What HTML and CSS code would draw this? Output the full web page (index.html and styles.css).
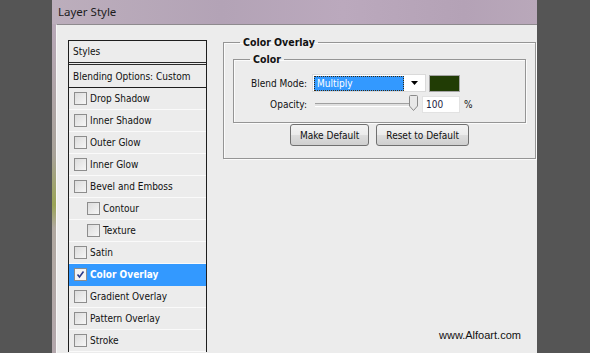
FILE: index.html
```html
<!DOCTYPE html>
<html>
<head>
    <meta charset="UTF-8">
    <title>Layer Style</title>
    <link rel="stylesheet" href="styles.css">
</head>
<body>
    <div class="window">
        <div class="titlebar">Layer Style</div>
        <div class="frame">
            <div class="edge"></div>
            <div class="dialog">
                <div class="styles-list">
                    <div class="row head">Styles</div>
                    <div class="row blend">Blending Options: Custom</div>
                    <div class="row item"><span class="check"></span>Drop Shadow</div>
                    <div class="row item"><span class="check"></span>Inner Shadow</div>
                    <div class="row item"><span class="check"></span>Outer Glow</div>
                    <div class="row item"><span class="check"></span>Inner Glow</div>
                    <div class="row item"><span class="check"></span>Bevel and Emboss</div>
                    <div class="row item sub"><span class="check"></span>Contour</div>
                    <div class="row item sub"><span class="check"></span>Texture</div>
                    <div class="row item"><span class="check"></span>Satin</div>
                    <div class="row item active"><span class="check checked">
                        <svg width="9" height="9" viewBox="0 0 9 9"><path d="M1.5 4.5 L3.5 7 L7.5 1.5" fill="none" stroke="#2b3a8c" stroke-width="1.6"/></svg>
                    </span>Color Overlay</div>
                    <div class="row item"><span class="check"></span>Gradient Overlay</div>
                    <div class="row item"><span class="check"></span>Pattern Overlay</div>
                    <div class="row item"><span class="check"></span>Stroke</div>
                </div>

                <fieldset class="group outer">
                    <legend>Color Overlay</legend>
                    <fieldset class="group inner">
                        <legend>Color</legend>
                        <div class="form">
                            <label>Blend Mode:</label>
                            <div class="controls">
                                <div class="select">
                                    <div class="select-value">Multiply</div>
                                    <div class="select-arrow">
                                        <svg width="7" height="4" viewBox="0 0 7 4"><path d="M0 0 H7 L3.5 4 Z" fill="#000"/></svg>
                                    </div>
                                </div>
                                <div class="swatch"></div>
                            </div>
                            <label>Opacity:</label>
                            <div class="controls">
                                <div class="slider">
                                    <div class="track"></div>
                                    <svg class="thumb" width="9" height="16" viewBox="0 0 9 16"><path d="M0.5 1.5 Q0.5 0.5 1.5 0.5 H7.5 Q8.5 0.5 8.5 1.5 V11 L4.5 15.5 L0.5 11 Z" fill="#e8e8e8" stroke="#8a8a8a"/></svg>
                                </div>
                                <div class="number">100</div>
                                <span class="unit">%</span>
                            </div>
                        </div>
                    </fieldset>
                    <div class="buttons">
                        <button>Make Default</button>
                        <button>Reset to Default</button>
                    </div>
                </fieldset>

                <div class="watermark">www.Alfoart.com</div>
            </div>
        </div>
    </div>
</body>
</html>
```

FILE: styles.css
```css
body {
    margin: 0;
    width: 590px;
    height: 353px;
    overflow: hidden;
    background-color: #555555;
    font-family: 'DejaVu Sans Condensed', 'Liberation Sans', sans-serif;
    font-size: 10px;
    color: #111;
}
.window {
    margin-left: 52px;
    width: 485px;
    height: 353px;
    display: flex;
    flex-direction: column;
}
.titlebar {
    height: 24px;
    line-height: 23px;
    padding-left: 6px;
    font-family: 'Noto Sans', sans-serif;
    font-size: 11.5px;
    color: #1c1c1c;
    background: linear-gradient(90deg, #bcaebc 0%, #b3a3b6 35%, #bba9bd 60%, #b4a2b6 85%, #b9a8ba 100%);
}
.frame {
    flex: 1;
    display: flex;
    min-height: 0;
}
.edge {
    width: 4px;
    background: linear-gradient(#b8a8b8 0%, #a8a298 40%, #9aa455 55%, #b0a8a0 62%, #b3a7ac 100%);
}
.dialog {
    flex: 1;
    position: relative;
    display: flex;
    align-items: flex-start;
    background-color: #ececec;
    border-top: 1px solid #8e8a8e;
    border-left: 1px solid #f7f7f7;
    padding: 15px 0 0 11px;
    overflow: hidden;
}
.styles-list {
    width: 137px;
    border: 1px solid #1e1e1e;
    border-bottom: none;
    flex-shrink: 0;
}
.row {
    display: flex;
    align-items: center;
    padding-left: 4px;
    height: 21px;
}
.row.head {
    border-bottom: 3px double #2a2a2a;
}
.row.blend {
    height: 22px;
    border-bottom: 1px solid #1e1e1e;
}
.row.item {
    border-bottom: 1px solid #fafafa;
    padding-left: 5px;
}
.row.sub {
    padding-left: 18px;
}
.row.active {
    background-color: #3399ff;
    color: #fff;
    font-weight: bold;
    border-bottom-color: #3399ff;
}
.check {
    width: 11px;
    height: 11px;
    margin-right: 3px;
    border: 1px solid #8d8d8d;
    background: linear-gradient(135deg, #dcdcdc, #f6f6f6);
    display: flex;
    align-items: center;
    justify-content: center;
}
.check.checked {
    background: #f4f4f4;
}

.group {
    margin: 0;
    padding: 0;
    border: 1px solid #959595;
    box-shadow: 1px 1px 0 #fbfbfb, inset 1px 1px 0 #fbfbfb;
}
.group legend {
    margin-left: 16px;
    padding: 0 3px;
    font-weight: bold;
    font-size: 10.5px;
}
.outer {
    margin: -4px 0 0 16px;
    width: 311px;
    height: 121px;
}
.inner {
    margin: 5px 9px 0 9px;
    height: 59px;
    padding-top: 9px;
}
.inner legend {
    margin-left: 16px;
}
.form {
    display: grid;
    grid-template-columns: 73px auto;
    column-gap: 5px;
    row-gap: 3px;
    align-items: center;
}
.form label {
    text-align: right;
}
.controls {
    display: flex;
    align-items: center;
    height: 18px;
}
.select {
    width: 111px;
    height: 16px;
    border: 1px solid #dadada;
    background: #fff;
    display: flex;
    align-items: center;
    padding-left: 1px;
}
.select-value {
    width: 86px;
    height: 13px;
    line-height: 13px;
    padding-left: 2px;
    background: #3399ff;
    color: #fff;
    border: 1px dotted #3a2a10;
}
.select-arrow {
    flex: 1;
    display: flex;
    justify-content: center;
    align-items: center;
}
.swatch {
    width: 29px;
    height: 15px;
    margin-left: 3px;
    border: 1px solid #a5a5a5;
    background: #213c05;
}
.slider {
    position: relative;
    width: 107px;
    height: 18px;
    margin-left: 3px;
}
.track {
    position: absolute;
    left: 0;
    right: 6px;
    top: 8px;
    height: 2px;
    border-top: 1px solid #a0a0a0;
    border-bottom: 1px solid #fff;
    background: #e0e0e0;
}
.thumb {
    position: absolute;
    left: 94px;
    top: 0;
}
.number {
    width: 33px;
    height: 15px;
    line-height: 15px;
    padding-left: 3px;
    border: 1px solid #e2e2e2;
    background: #fff;
    color: #1a1a40;
}
.unit {
    margin-left: 4px;
}
.buttons {
    display: flex;
    justify-content: center;
    gap: 7px;
    margin-top: 1px;
}
.buttons button {
    font-family: inherit;
    font-size: 10px;
    color: #111;
    height: 22px;
    padding: 0 9px;
    border: 1px solid #707070;
    border-radius: 3px;
    background: linear-gradient(#f3f3f3 0%, #ebebeb 50%, #dddddd 51%, #cfcfcf 100%);
}
.watermark {
    position: absolute;
    left: 382px;
    top: 304px;
    font-family: 'Liberation Sans', Arial, sans-serif;
    font-size: 11px;
    color: #111;
}
```
